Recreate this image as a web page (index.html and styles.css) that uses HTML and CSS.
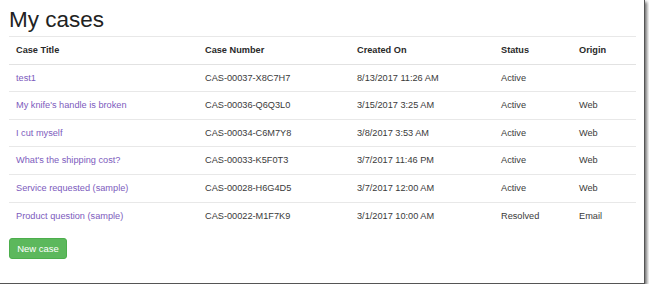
FILE: index.html
```html
<!DOCTYPE html>
<html>
<head>
  <title>My cases</title>
  <link rel="stylesheet" href="styles.css">
</head>
<body>
  <div class="frame">
    <h2>My cases</h2>
    <table class="cases">
      <thead>
        <tr>
          <th class="col-title">Case Title</th>
          <th class="col-number">Case Number</th>
          <th class="col-created">Created On</th>
          <th class="col-status">Status</th>
          <th class="col-origin">Origin</th>
        </tr>
      </thead>
      <tbody>
        <tr>
          <td><a href="#">test1</a></td>
          <td>CAS-00037-X8C7H7</td>
          <td>8/13/2017 11:26 AM</td>
          <td>Active</td>
          <td></td>
        </tr>
        <tr>
          <td><a href="#">My knife's handle is broken</a></td>
          <td>CAS-00036-Q6Q3L0</td>
          <td>3/15/2017 3:25 AM</td>
          <td>Active</td>
          <td>Web</td>
        </tr>
        <tr>
          <td><a href="#">I cut myself</a></td>
          <td>CAS-00034-C6M7Y8</td>
          <td>3/8/2017 3:53 AM</td>
          <td>Active</td>
          <td>Web</td>
        </tr>
        <tr>
          <td><a href="#">What's the shipping cost?</a></td>
          <td>CAS-00033-K5F0T3</td>
          <td>3/7/2017 11:46 PM</td>
          <td>Active</td>
          <td>Web</td>
        </tr>
        <tr>
          <td><a href="#">Service requested (sample)</a></td>
          <td>CAS-00028-H6G4D5</td>
          <td>3/7/2017 12:00 AM</td>
          <td>Active</td>
          <td>Web</td>
        </tr>
        <tr>
          <td><a href="#">Product question (sample)</a></td>
          <td>CAS-00022-M1F7K9</td>
          <td>3/1/2017 10:00 AM</td>
          <td>Resolved</td>
          <td>Email</td>
        </tr>
      </tbody>
    </table>
    <button class="btn-new">New case</button>
  </div>
</body>
</html>
```

FILE: styles.css
```css
body {
  margin: 0;
  background: #fff;
  font-family: "Liberation Sans", Arial, sans-serif;
  color: #3a3a3a;
}
.frame {
  width: 635px;
  height: 283px;
  padding: 0 0 0 9px;
  border-right: 1px solid #555;
  border-bottom: 1px solid #555;
  box-shadow: 2px 2px 3px rgba(0,0,0,0.55);
  overflow: hidden;
}
h2 {
  margin: 7px 0 4px;
  font-size: 22.5px;
  font-weight: normal;
  line-height: 25px;
  color: #222;
}
.cases {
  width: 627px;
  border-collapse: collapse;
  table-layout: fixed;
  font-size: 9.2px;
}
.cases th,
.cases td {
  padding: 6px 7px;
  line-height: 14.6px;
  text-align: left;
  border-top: 1px solid #e8e8e8;
  white-space: nowrap;
}
.cases th {
  font-weight: bold;
  color: #2a2a2a;
  border-bottom: 1.5px solid #e2e2e2;
}
.col-title { width: 175px; }
.col-number { width: 138px; }
.col-created { width: 130px; }
.col-status { width: 64px; }
.col-origin { width: 50px; }
.cases a {
  color: #7d5bbd;
  text-decoration: none;
}
.btn-new {
  margin-top: 9px;
  width: 58px;
  height: 21px;
  padding: 0;
  background: #5cb85c;
  color: #fff;
  border: 1px solid #4cae4c;
  border-radius: 3px;
  font-family: "Liberation Sans", Arial, sans-serif;
  font-size: 9.5px;
  cursor: pointer;
}
```
